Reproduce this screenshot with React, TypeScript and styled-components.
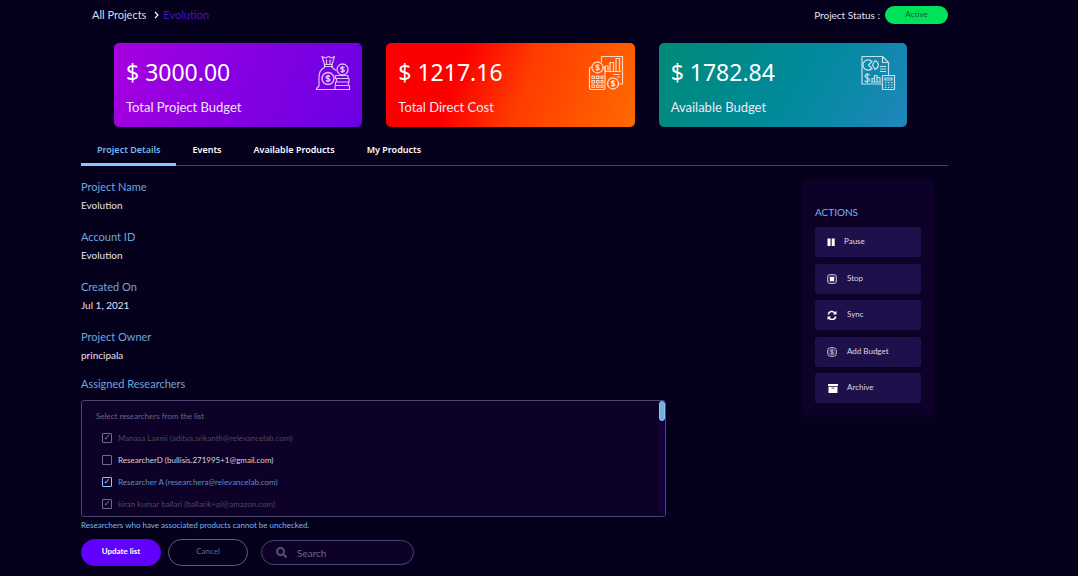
import React from "react";
import styled, { createGlobalStyle, css } from "styled-components";

const GlobalStyle = createGlobalStyle`
  * { box-sizing: border-box; }
  body {
    margin: 0;
    background: #05001c;
    color: #e4e2ee;
    font-family: Lato, "Noto Sans", sans-serif;
    font-size: 10px;
  }
  button, input { font-family: inherit; }
  h2, p, dl, dd, ul { margin: 0; padding: 0; }
`;

const Page = styled.main`
  padding: 5px 130px 10px 81px;
`;

const TopBar = styled.header`
  display: flex;
  justify-content: space-between;
  align-items: center;
  height: 20px;
  padding-left: 11px;
`;

const Breadcrumb = styled.nav`
  display: flex;
  align-items: center;
  gap: 4px;
  font-size: 11px;
  line-height: 16px;
`;

const Crumb = styled.a<{ $current?: boolean }>`
  padding-right: 4px;
  color: ${(p) => (p.$current ? "#4b10c4" : "#dcdae6")};
  text-decoration: none;
`;

const Status = styled.div`
  display: flex;
  align-items: center;
  gap: 5px;
  line-height: 16px;
`;

const StatusPill = styled.span`
  width: 63px;
  height: 18px;
  border-radius: 9px;
  background: #00e359;
  color: #0b5a3c;
  font-size: 8px;
  line-height: 17px;
  text-align: center;
`;

const Cards = styled.section`
  display: grid;
  grid-template-columns: repeat(3, 1fr);
  gap: 24px;
  margin-top: 18px;
  padding: 0 41px 0 33px;
`;

const Card = styled.article<{ $fill: string }>`
  display: flex;
  justify-content: space-between;
  height: 84px;
  padding: 12px 11px 0 12px;
  border-radius: 5px;
  background: ${(p) => p.$fill};
`;

const Amount = styled.p`
  color: #fff;
  font-family: "Noto Sans", sans-serif;
  font-size: 23px;
  line-height: 34px;
`;

const Caption = styled.p`
  margin-top: 9px;
  color: #f0e6fa;
  font-size: 13px;
  line-height: 18px;
`;

const CardIcon = styled.svg`
  width: 36px;
  height: 36px;
  fill: none;
  stroke: #fff;
  stroke-opacity: 0.75;
  stroke-width: 1.2;
  stroke-linejoin: round;
`;

const Tabs = styled.div`
  display: flex;
  height: 39px;
  border-bottom: 1px solid #45406a;
`;

const Tab = styled.button<{ $active?: boolean }>`
  height: 39px;
  padding: 8px 16px 0;
  border: 0;
  border-bottom: 3px solid ${(p) => (p.$active ? "#84c8ff" : "transparent")};
  background: none;
  color: ${(p) => (p.$active ? "#78b8ee" : "#fff")};
  font-family: "Noto Sans", sans-serif;
  font-size: 9px;
  font-weight: 600;
`;

const Columns = styled.div`
  display: flex;
  justify-content: space-between;
  align-items: flex-start;
  padding: 13px 13px 0 0;
`;

const Details = styled.section`
  width: 585px;
`;

const Fields = styled.dl`
  display: grid;
  gap: 16px;
`;

const labelText = css`
  color: #6ea6dc;
  font-size: 11px;
  font-weight: 400;
  line-height: 16px;
`;

const FieldLabel = styled.dt`
  ${labelText}
`;

const FieldValue = styled.dd`
  margin-top: 2px;
  line-height: 16px;
`;

const SectionTitle = styled.h2`
  ${labelText}
  margin-top: 13px;
`;

const Picker = styled.div`
  display: flex;
  justify-content: space-between;
  height: 117px;
  margin-top: 8px;
  border: 1px solid #4a4570;
  border-radius: 3px;
  background: #0e0128;
  overflow: hidden;
`;

const Options = styled.div`
  padding: 7px 14px 0;
  font-size: 8px;
`;

const OptionsHint = styled.p`
  color: #6b6586;
  line-height: 16px;
`;

const OptionList = styled.ul`
  margin-top: 3px;
  padding-left: 6px;
  list-style: none;
`;

type Tone = "locked" | "plain" | "chosen";

const toneColor: Record<Tone, string> = {
  locked: "#4c4664",
  plain: "#d6d4de",
  chosen: "#5c8fc2",
};

const Option = styled.label<{ $tone: Tone }>`
  display: flex;
  align-items: center;
  gap: 6px;
  height: 22px;
  color: ${(p) => toneColor[p.$tone]};
`;

const Tick = styled.input<{ $tone: Tone }>`
  appearance: none;
  display: grid;
  place-items: center;
  width: 10px;
  height: 10px;
  margin: 0;
  border: 1px solid ${(p) => (p.$tone === "chosen" ? "#84c8ff" : "#6f6a94")};
  border-radius: 1px;

  &:checked::before {
    content: "✓";
    color: ${(p) => (p.$tone === "chosen" ? "#b4dcff" : "#8d88ac")};
    font-family: "DejaVu Sans", sans-serif;
    font-size: 8px;
    line-height: 8px;
  }
`;

const ScrollTrack = styled.div`
  width: 6px;
  background: #14003c;
`;

const ScrollThumb = styled.div`
  height: 20px;
  border: 1px solid #84c8ff;
  border-radius: 3px;
  background: #74aede;
`;

const Note = styled.p`
  color: #78b8e8;
  font-size: 8px;
  line-height: 16px;
`;

const Footer = styled.div`
  display: flex;
  align-items: center;
  gap: 7px;
  margin-top: 6px;
`;

const PillButton = styled.button<{ $primary?: boolean }>`
  width: 80px;
  height: 27px;
  padding: 0 0 3px;
  border: 1px solid ${(p) => (p.$primary ? "#6200ff" : "#625d88")};
  border-radius: 14px;
  background: ${(p) => (p.$primary ? "#6200ff" : "transparent")};
  color: ${(p) => (p.$primary ? "#fff" : "#6b6688")};
  font-size: 8px;
  font-weight: ${(p) => (p.$primary ? 700 : 400)};
`;

const SearchBox = styled.label`
  display: flex;
  align-items: center;
  gap: 10px;
  width: 153px;
  height: 25px;
  margin-left: 6px;
  padding: 0 14px;
  border: 1px solid #4a4570;
  border-radius: 13px;
  background: #0e0128;
`;

const SearchIcon = styled.svg`
  flex: none;
  width: 11px;
  height: 11px;
  fill: none;
  stroke: #54506f;
  stroke-width: 2;
`;

const SearchInput = styled.input`
  min-width: 0;
  width: 100%;
  padding: 0;
  border: 0;
  outline: 0;
  background: none;
  color: #e4e2ee;
  font-size: 10px;
  line-height: 16px;

  &::placeholder { color: #6b6784; opacity: 1; }
`;

const Panel = styled.aside`
  width: 134px;
  padding: 25px 14px 14px;
  border-radius: 8px;
  background: #0e0128;
`;

const PanelTitle = styled.h2`
  color: #74b8ec;
  font-size: 10px;
  font-weight: 400;
  line-height: 16px;
`;

const ActionList = styled.div`
  display: flex;
  flex-direction: column;
  justify-content: space-between;
  height: 176px;
  margin-top: 7px;
`;

const Action = styled.button`
  display: flex;
  align-items: center;
  gap: 9px;
  width: 100%;
  height: 30px;
  padding: 0 12px;
  border: 0;
  border-radius: 3px;
  background: #1e104a;
  color: #dcdae6;
  font-size: 8px;
`;

const ActionLabel = styled.span`
  padding-bottom: 2px;
`;

const ActionIcon = styled.svg<{ $narrow?: boolean }>`
  width: ${(p) => (p.$narrow ? "8px" : "11px")};
  height: 10px;
`;

const Coin = ({ x, y, r }: { x: number; y: number; r: number }) => (
  <g transform={`translate(${x} ${y}) scale(${r / 5})`}>
    <circle r="5" />
    <path d="M1.7-1.5C1-2.6-1.7-2.4-1.7-1.1 -1.7.3 1.7-.3 1.7 1.1 1.7 2.4-1 2.6-1.7 1.5M0-3.2V3.2" />
  </g>
);

const MoneyBag = () => (
  <CardIcon viewBox="0 0 36 36" aria-hidden="true">
    <path d="M7 1.5L9.5 9.5H17L19.5 1.5L16.500 3L13.500 1.500L10.500 3ZM11.500 4.500V9M15 4.500V9M9 11.500H18" />
    <path d="M9.500 9.500V12.500C5 14.500 4 18 4 22V31L1.500 33.500V34.500H20M17 9.500V12.500L21 15.500" />
    <Coin x={13} y={23.5} r={6} />
    <Coin x={27.5} y={14.5} r={5.5} />
    <path d="M20.500 20.500H33V23.500H20.500ZM21.500 23.500H34V27H21.500ZM20.500 27H33.500V30.500H20.500ZM20 31V34.500H34.500V30.500" />
  </CardIcon>
);

const CostChart = () => (
  <CardIcon viewBox="0 0 36 36" aria-hidden="true">
    <path d="M13.500 7V1.500H34.500V29H30.500M17 16.500H33M17 16V11H20V16M22 16V7.500H25.500V16M28 16V3.500H31.500V16M25 19.500H32M29 22H32" />
    <path d="M4 12H3Q1.500 12 1.500 14V32.500Q1.500 34.500 3.500 34.500H15Q17 34.500 17 32.500V14Q17 12 15 12" />
    <Coin x={9.5} y={12.5} r={5.5} />
    <Coin x={25} y={28.5} r={5.5} />
    <path d="M4 21H6.500V23.500H4ZM8.500 21H11V23.500H8.500ZM13 21H15V23.500H13ZM4 25.500H6.500V28H4ZM8.500 25.500H11V28H8.500ZM13 25.500H15V28H13ZM4 30H6.500V32.500H4ZM8.500 30H11V32.500H8.500ZM13 30H15V32.500H13Z" />
  </CardIcon>
);

const BudgetReport = () => (
  <CardIcon viewBox="0 0 36 36" aria-hidden="true">
    <path d="M22 29H2V1.500H22.500L28.500 7.500V20M22.500 1.500V7.500H28.500M20 11.500H26M20 14H26M20 16.500H26" />
    <path d="M12 6.500A5.200 5.200 0 1 0 12 13.500L8.500 10ZM15 5.500L12.500 10L15 14.500C19.500 12 19.500 8 15 5.500Z" />
    <path d="M9.500 20.500C8.500 18.500 5 19 5 21 5 23.500 9.500 22.500 9.500 25 9.500 27 6 27.500 4.500 25.500M7.200 18V28M12 27V23.500H14.500V27M14.500 27V20.500H17V27M17 22.500H20V27M11 27H21" />
    <path d="M22.500 20.500H34.500V34.500H22.500ZM25 23H32V25H25ZM25 27.500H26.500M28 27.500H29.500M31 27.500H32.500M25 30H26.500M28 30H29.500M31 30H32.500M25 32.500H26.500M28 32.500H29.500M31 32.500H32.500" />
  </CardIcon>
);

const cards = [
  { amount: "$ 3000.00", caption: "Total Project Budget", fill: "linear-gradient(110deg, #a800e0, #8500e2 50%, #6c00e4)", icon: <MoneyBag /> },
  { amount: "$ 1217.16", caption: "Total Direct Cost", fill: "linear-gradient(110deg, #fc0000 30%, #ff3c00 55%, #ff6a00)", icon: <CostChart /> },
  { amount: "$ 1782.84", caption: "Available Budget", fill: "linear-gradient(120deg, #008a78, #008a9c 55%, #1f86bc)", icon: <BudgetReport /> },
];

const tabs = ["Project Details", "Events", "Available Products", "My Products"];

const fields = [
  ["Project Name", "Evolution"],
  ["Account ID", "Evolution"],
  ["Created On", "Jul 1, 2021"],
  ["Project Owner", "principala"],
];

const researchers: { text: string; tone: Tone; checked: boolean }[] = [
  { text: "Manasa Laxmi (aditya.srikanth@relevancelab.com)", tone: "locked", checked: true },
  { text: "ResearcherD (bullisis.271995+1@gmail.com)", tone: "plain", checked: false },
  { text: "Researcher A (researchera@relevancelab.com)", tone: "chosen", checked: true },
  { text: "kiran kumar ballari (ballarik+pi@amazon.com)", tone: "locked", checked: true },
];

const actions = [
  {
    label: "Pause",
    icon: <ActionIcon $narrow viewBox="0 0 8 10" fill="#fff"><path d="M.5 1.500H3.500V9H.5ZM4.700 1.500H7.700V9H4.700Z" /></ActionIcon>,
  },
  {
    label: "Stop",
    icon: (
      <ActionIcon viewBox="0 0 11 10" fill="#4a4270" stroke="#a9a3c4">
        <rect x=".5" y=".5" width="9" height="9" rx="2.500" />
        <rect x="3" y="3" width="4" height="4" fill="#fff" stroke="none" />
      </ActionIcon>
    ),
  },
  {
    label: "Sync",
    icon: (
      <ActionIcon viewBox="0 0 11 10" fill="none" stroke="#fff" strokeWidth="1.600">
        <path d="M1.300 4.500A3.600 3.600 0 0 1 7.800 3M8.700 6.500A3.600 3.600 0 0 1 2.200 8" />
        <path d="M9.500.8V4.500H5.800ZM.5 10V6.500H4.200Z" fill="#fff" stroke="none" />
      </ActionIcon>
    ),
  },
  {
    label: "Add Budget",
    icon: (
      <ActionIcon viewBox="0 0 11 10" fill="#3d3464" stroke="#a9a3c4">
        <rect x=".5" y=".5" width="9" height="9" rx="3.500" />
        <path d="M6.800 3.600C6.300 2.500 3.400 2.500 3.400 3.900 3.400 5.300 6.700 4.700 6.700 6.200 6.700 7.500 3.800 7.500 3.200 6.400M5 1.800V8.200" fill="none" />
      </ActionIcon>
    ),
  },
  {
    label: "Archive",
    icon: (
      <ActionIcon viewBox="0 0 11 10" fill="#fff">
        <path d="M1 1H11V3H1ZM1.500 3.800H10.500V10H1.500ZM4.500 4.800V5.600H7.500V4.800Z" fillRule="evenodd" />
      </ActionIcon>
    ),
  },
];

export default function App() {
  return (
    <>
      <GlobalStyle />
      <Page>
        <TopBar>
          <Breadcrumb aria-label="Breadcrumb">
            <Crumb href="#projects">All Projects</Crumb>
            <svg width="5" height="8" viewBox="0 0 5 8" fill="none" stroke="#fff" strokeWidth="1.200" aria-hidden="true">
              <path d="M1 1L4 4L1 7" />
            </svg>
            <Crumb href="#evolution" $current aria-current="page">Evolution</Crumb>
          </Breadcrumb>
          <Status>
            Project Status :<StatusPill>Active</StatusPill>
          </Status>
        </TopBar>

        <Cards>
          {cards.map((c) => (
            <Card key={c.caption} $fill={c.fill}>
              <div>
                <Amount>{c.amount}</Amount>
                <Caption>{c.caption}</Caption>
              </div>
              {c.icon}
            </Card>
          ))}
        </Cards>

        <Tabs role="tablist">
          {tabs.map((t, i) => (
            <Tab key={t} role="tab" aria-selected={i === 0} $active={i === 0}>{t}</Tab>
          ))}
        </Tabs>

        <Columns>
          <Details>
            <Fields>
              {fields.map(([label, value]) => (
                <div key={label}>
                  <FieldLabel>{label}</FieldLabel>
                  <FieldValue>{value}</FieldValue>
                </div>
              ))}
            </Fields>
            <SectionTitle>Assigned Researchers</SectionTitle>
            <Picker>
              <Options>
                <OptionsHint>Select researchers from the list</OptionsHint>
                <OptionList>
                  {researchers.map((r) => (
                    <li key={r.text}>
                      <Option $tone={r.tone}>
                        <Tick type="checkbox" $tone={r.tone} defaultChecked={r.checked} disabled={r.tone === "locked"} />
                        {r.text}
                      </Option>
                    </li>
                  ))}
                </OptionList>
              </Options>
              <ScrollTrack>
                <ScrollThumb />
              </ScrollTrack>
            </Picker>
            <Note>Researchers who have associated products cannot be unchecked.</Note>
            <Footer>
              <PillButton $primary>Update list</PillButton>
              <PillButton>Cancel</PillButton>
              <SearchBox>
                <SearchIcon viewBox="0 0 11 11" aria-hidden="true">
                  <circle cx="4.500" cy="4.500" r="3.500" />
                  <path d="M7 7L10.500 10.500" />
                </SearchIcon>
                <SearchInput type="search" placeholder="Search" aria-label="Search" />
              </SearchBox>
            </Footer>
          </Details>

          <Panel>
            <PanelTitle>ACTIONS</PanelTitle>
            <ActionList>
              {actions.map((a) => (
                <Action key={a.label}>
                  {a.icon}
                  <ActionLabel>{a.label}</ActionLabel>
                </Action>
              ))}
            </ActionList>
          </Panel>
        </Columns>
      </Page>
    </>
  );
}
